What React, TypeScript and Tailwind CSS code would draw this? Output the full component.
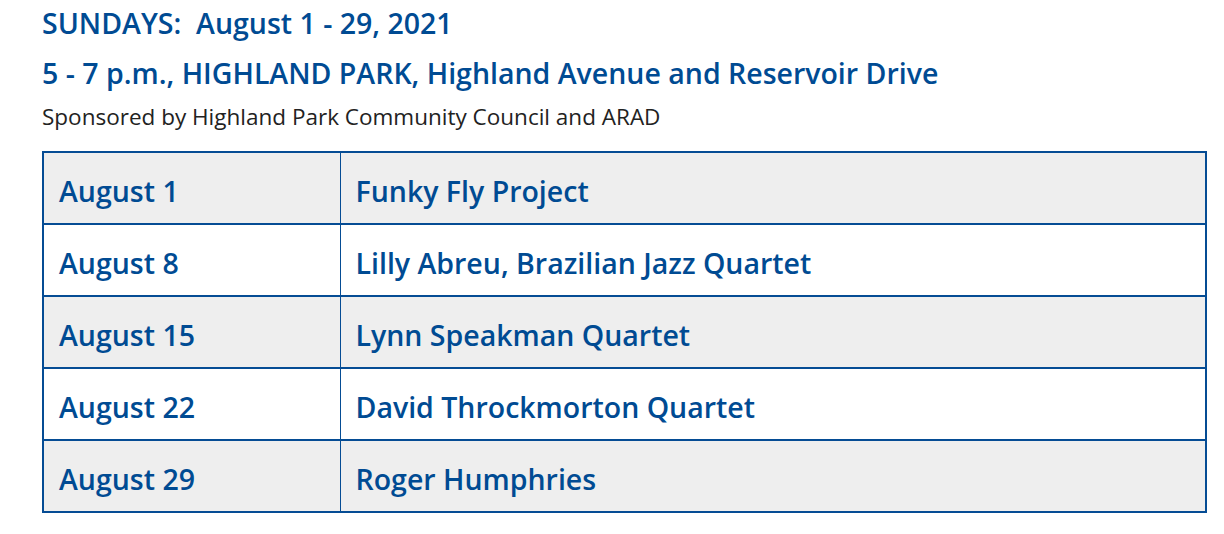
import React from 'react';

const rows = [
  { date: 'August 1', act: 'Funky Fly Project' },
  { date: 'August 8', act: 'Lilly Abreu, Brazilian Jazz Quartet' },
  { date: 'August 15', act: 'Lynn Speakman Quartet' },
  { date: 'August 22', act: 'David Throckmorton Quartet' },
  { date: 'August 29', act: 'Roger Humphries' },
];

export default function App() {
  return (
    <div className="w-[1224px] h-[534px] bg-white pl-[42px] pr-[17px] pt-[3px] font-['Open_Sans',sans-serif]">
      <h2 className="text-[28.5px] leading-[40px] font-semibold text-[#004b93]">SUNDAYS:&nbsp; August 1 - 29, 2021</h2>
      <h3 className="mt-[10px] text-[28.5px] leading-[40px] font-semibold text-[#004b93]">
        5 - 7 p.m., HIGHLAND PARK, Highland Avenue and Reservoir Drive
      </h3>
      <p className="mt-[9px] mb-[-1px] text-[22.5px] leading-[30px] text-[#222]">Sponsored by Highland Park Community Council and ARAD</p>
      <table className="mt-[20px] w-full border-collapse border-2 border-[#054c94]">
        <tbody>
          {rows.map((row, i) => (
            <tr key={row.date} className={`h-[72px] border-b-2 border-[#054c94] ${i % 2 === 0 ? 'bg-[#eeeeee]' : 'bg-white'}`}>
              <td className="w-[297px] border-r border-[#054c94] pl-[15px] pr-4 pt-[6px] text-[28.5px] font-semibold text-[#004b93]">{row.date}</td>
              <td className="pl-[15px] pr-4 pt-[6px] text-[28.5px] font-semibold text-[#004b93]">{row.act}</td>
            </tr>
          ))}
        </tbody>
      </table>
    </div>
  );
}
